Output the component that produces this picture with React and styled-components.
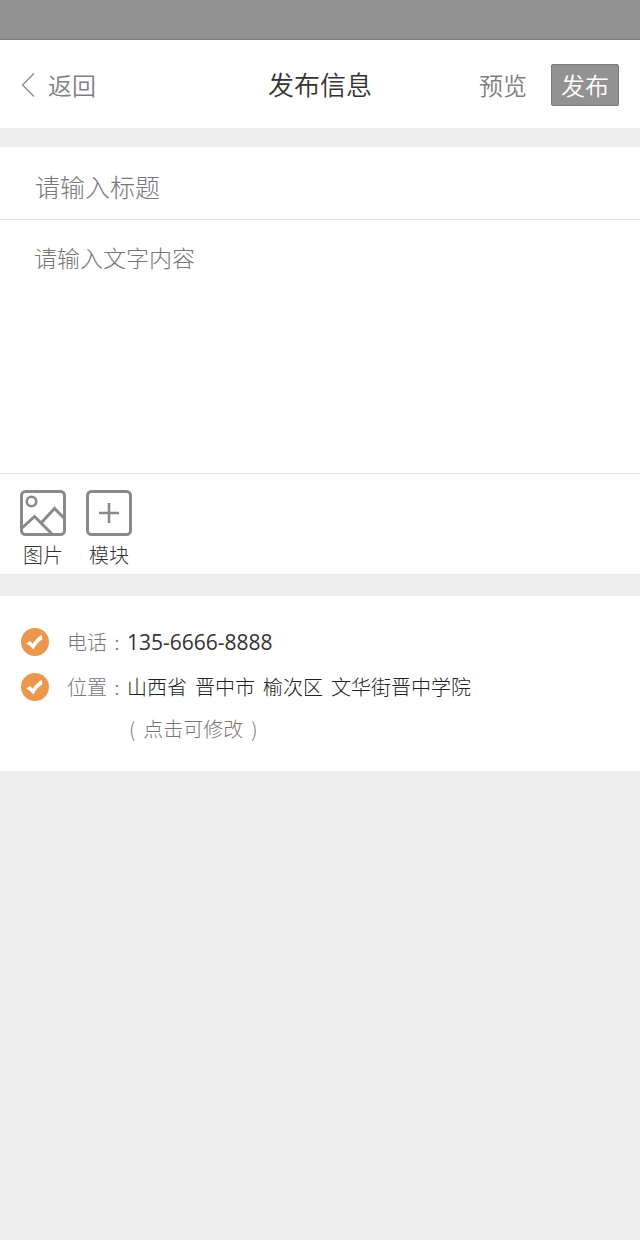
import React, { useState } from 'react'
import styled, { createGlobalStyle } from 'styled-components'

const App = () => {
  const [title, setTitle] = useState('')
  const [content, setContent] = useState('')
  const [showPhone, setShowPhone] = useState(true)
  const [showPlace, setShowPlace] = useState(true)
  const place = ['山西省', '晋中市', '榆次区', '文华街晋中学院']

  return (
    <>
      <GlobalStyle />
      <StatusBar />
      <Header>
        <BackLink href='#back'>
          <BackIcon />
          返回
        </BackLink>
        <h1>发布信息</h1>
        <Actions>
          <PreviewButton type='button'>预览</PreviewButton>
          <PublishButton type='button'>发布</PublishButton>
        </Actions>
      </Header>
      <Editor>
        <TitleInput
          aria-label='标题'
          placeholder='请输入标题'
          value={title}
          onChange={(e) => setTitle(e.target.value)}
        />
        <ContentInput
          aria-label='文字内容'
          placeholder='请输入文字内容'
          value={content}
          onChange={(e) => setContent(e.target.value)}
        />
        <Toolbar>
          <ToolButton type='button'>
            <ImageIcon />
            图片
          </ToolButton>
          <ToolButton type='button'>
            <ModuleIcon />
            模块
          </ToolButton>
        </Toolbar>
      </Editor>
      <Contact>
        <ContactRow>
          <Check id='phone' checked={showPhone} onChange={setShowPhone} />
          <label htmlFor='phone'>电话</label>
          <Colon>:</Colon>
          <Phone>135-6666-8888</Phone>
        </ContactRow>
        <ContactRow>
          <Check id='place' checked={showPlace} onChange={setShowPlace} />
          <label htmlFor='place'>位置</label>
          <Colon>:</Colon>
          <Place>
            {place.map((item) => {
              return <span key={item}>{item}</span>
            })}
          </Place>
        </ContactRow>
        <EditButton type='button'>
          <span>(</span>
          点击可修改
          <span>)</span>
        </EditButton>
      </Contact>
    </>
  )
}

const Check = ({ id, checked, onChange }) => {
  return (
    <CheckWrapper>
      <input
        id={id}
        type='checkbox'
        checked={checked}
        onChange={(e) => onChange(e.target.checked)}
      />
      <svg viewBox='0 0 28 28' aria-hidden='true'>
        <path
          d='M5.2 15.4 L9 13 L11.8 15.8 C13.8 12.4 17 9.2 20.6 6.8 L21.4 11.2 C17.6 13.6 14.8 17 12.4 21.4 C10.4 18.8 8.2 16.8 5.2 15.4 Z'
          fill='#fff'
        />
      </svg>
    </CheckWrapper>
  )
}

const BackIcon = () => (
  <svg width='14' height='26' viewBox='0 0 14 26' fill='none' aria-hidden='true'>
    <path d='M13 1.5 L1.5 13 L13 24.5' stroke='#868686' strokeWidth='1.2' />
  </svg>
)

const ImageIcon = () => (
  <svg width='46' height='46' viewBox='0 0 46 46' fill='none' aria-hidden='true'>
    <g stroke='#8a8a8a' strokeWidth='3'>
      <rect x='1.5' y='1.5' width='43' height='43' rx='4' />
      <circle cx='11.5' cy='11.5' r='4.7' strokeWidth='2.6' />
      <path d='M2 38 L14.5 26.5 L32 44' />
      <path d='M21.5 32.5 L34.5 18.5 L44 28' />
    </g>
  </svg>
)

const ModuleIcon = () => (
  <svg width='46' height='46' viewBox='0 0 46 46' fill='none' aria-hidden='true'>
    <g stroke='#8a8a8a' strokeWidth='3'>
      <rect x='1.5' y='1.5' width='43' height='43' rx='4' />
      <path d='M13 23 H33 M23 13 V33' strokeWidth='2.6' />
    </g>
  </svg>
)

const GlobalStyle = createGlobalStyle`
  * {
    box-sizing: border-box;
    margin: 0;
    padding: 0;
  }
  body {
    background: #ededed;
    color: #333;
    font-family: 'Noto Sans CJK SC', sans-serif;
    font-weight: 300;
  }
  button,
  input,
  textarea {
    border: none;
    background: none;
    color: inherit;
    font: inherit;
    outline: none;
  }
  button {
    cursor: pointer;
  }
  svg {
    display: block;
  }
`

const StatusBar = styled.div`
  height: 40px;
  background: #929292;
  border-bottom: 1px solid #7c7c7c;
`

const Header = styled.header`
  display: grid;
  grid-template-columns: 1fr auto 1fr;
  align-items: center;
  height: 88px;
  padding: 2px 21px 0;
  background: #fff;
  font-weight: 350;
  h1 {
    font-size: 26px;
    font-weight: 350;
    line-height: 42px;
    padding-bottom: 2px;
  }
`

const BackLink = styled.a`
  display: flex;
  align-items: center;
  gap: 13px;
  color: #808080;
  font-size: 24px;
  line-height: 40px;
  text-decoration: none;
`

const Actions = styled.div`
  display: flex;
  align-items: center;
  justify-content: flex-end;
  gap: 24px;
`

const PreviewButton = styled.button`
  color: #808080;
  font-size: 24px;
  line-height: 40px;
`

const PublishButton = styled.button`
  width: 68px;
  height: 42px;
  border: 1px solid #7c7c7c;
  border-radius: 2px;
  background: #929292;
  color: #fff;
  font-size: 24px;
  line-height: 40px;
`

const Editor = styled.section`
  margin-top: 19px;
  background: #fff;
  input,
  textarea {
    display: block;
    width: 100%;
    border-bottom: 1px solid #e2e2e2;
    &::placeholder {
      color: #777;
      opacity: 1;
    }
  }
`

const TitleInput = styled.input`
  height: 73px;
  padding: 6px 35px 0;
  font-size: 25px;
`

const ContentInput = styled.textarea`
  height: 254px;
  padding: 17px 34px;
  font-size: 23px;
  line-height: 40px;
  resize: none;
`

const Toolbar = styled.div`
  display: flex;
  gap: 20px;
  padding: 16px 20px 0;
`

const ToolButton = styled.button`
  display: flex;
  flex-direction: column;
  align-items: center;
  width: 46px;
  font-size: 20px;
  line-height: 38px;
`

const Contact = styled.section`
  margin-top: 22px;
  padding: 23px 21px;
  background: #fff;
  color: #777;
  font-size: 20px;
`

const ContactRow = styled.div`
  display: grid;
  grid-template-columns: 46px 40px 20px 1fr;
  align-items: center;
  height: 45px;
`

const Colon = styled.span`
  text-align: center;
`

const CheckWrapper = styled.span`
  display: grid;
  width: 28px;
  height: 28px;
  input,
  svg {
    grid-area: 1 / 1;
    width: 28px;
    height: 28px;
  }
  input {
    appearance: none;
    border-radius: 50%;
    background: #c8c8c8;
    cursor: pointer;
  }
  input:checked {
    background: #ec974e;
  }
  svg {
    pointer-events: none;
  }
`

const Phone = styled.span`
  color: #333;
  font-family: 'Open Sans', sans-serif;
  font-size: 21px;
  font-weight: 400;
`

const Place = styled.span`
  display: flex;
  flex-wrap: wrap;
  gap: 8px;
  color: #222;
`

const EditButton = styled.button`
  display: flex;
  gap: 8px;
  margin-left: 108px;
  line-height: 39px;
`

export default App
